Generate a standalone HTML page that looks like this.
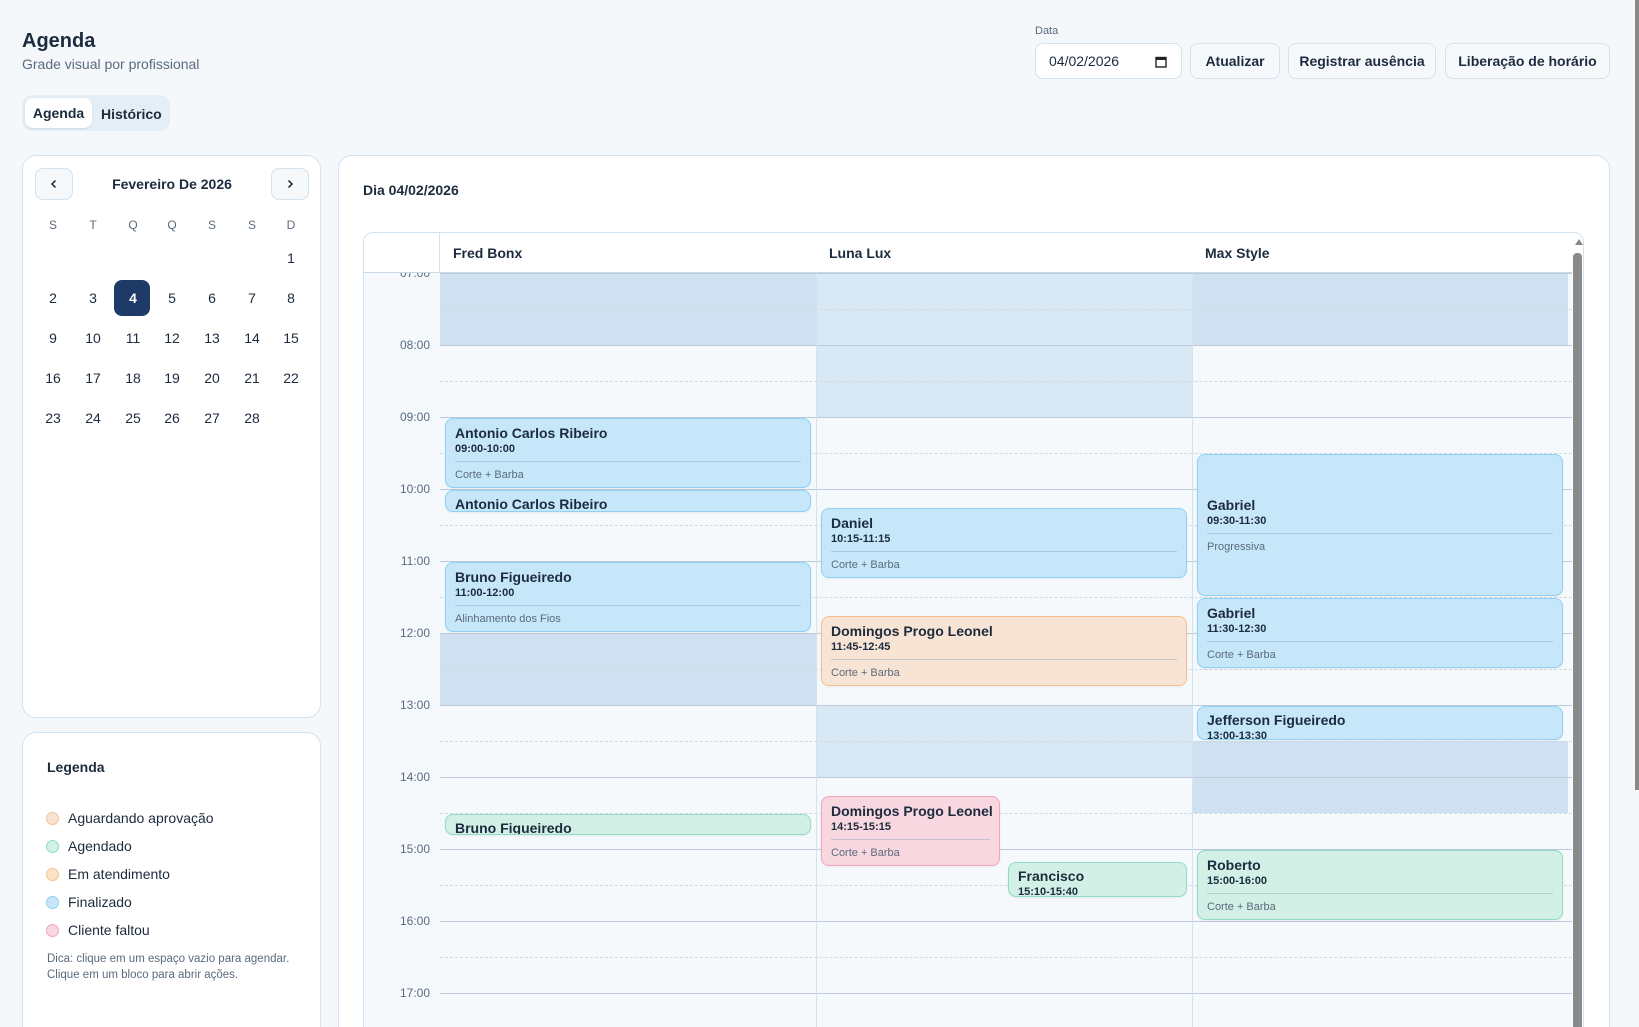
<!DOCTYPE html>
<html><head><meta charset="utf-8"><style>
*{box-sizing:border-box;margin:0;padding:0}
html,body{width:1639px;height:1027px;overflow:hidden}
body{background:#f4f8fb;font-family:"Liberation Sans",sans-serif;color:#1c2b3d;position:relative}
.a{position:absolute}
.btn{position:absolute;top:43px;height:36px;border:1px solid #d3e2ef;border-radius:8px;background:#f6f9fc;font-size:14px;font-weight:600;display:flex;align-items:center;justify-content:center;color:#1c2b3d}
.card{position:absolute;background:#fff;border:1px solid #d3e2ef;border-radius:14px}
.dl{position:absolute;width:36px;text-align:center;font-size:14px;transform:translateX(-18px)}
.wd{position:absolute;width:20px;text-align:center;font-size:12px;color:#5b6b7c;transform:translateX(-10px);top:218px}
.ev{position:absolute;border:1px solid #8fd0f3;background:#c5e7f9;border-radius:8px;padding:5px 9px;display:flex;flex-direction:column;justify-content:safe center;overflow:hidden;box-shadow:0 1px 2px rgba(0,0,0,.06)}
.ev b{font-size:14px;font-weight:600;line-height:17px;white-space:nowrap}
.ev i{font-style:normal;font-size:11px;font-weight:700;line-height:14px}
.ev hr{border:0;border-top:1px solid rgba(100,140,170,.3);margin:5px 0 6px}
.ev s{text-decoration:none;font-size:11px;color:#5b6b7c;line-height:14px}
.or{background:#f8e4d4;border-color:#f5c08f}
.pk{background:#f8d7e0;border-color:#f2a5b8}
.gr{background:#d2f0e6;border-color:#8fdcc0}
.sh{position:absolute;background:#cfe1f0}
.hl{position:absolute;left:76px;right:0;height:0;border-top:1px solid #bccbd9}
.hh{position:absolute;left:76px;right:0;height:0;border-top:1px dashed #cdd9e3}
.tl{position:absolute;left:0;width:66px;text-align:right;font-size:12px;color:#5b6b7c}
.lg{position:absolute;left:46px;font-size:14px;display:flex;align-items:center}
.lg span{width:13px;height:13px;border-radius:50%;margin-right:9px;border:1px solid}
</style></head><body>
<div class="a" style="left:22px;top:30px;font-size:20px;font-weight:600">Agenda</div>
<div class="a" style="left:22px;top:56px;font-size:14px;color:#5b6b7c">Grade visual por profissional</div>
<div class="a" style="left:22px;top:95px;width:148px;height:36px;background:#e6eef5;border-radius:10px"></div>
<div class="a" style="left:25px;top:98px;width:67px;height:30px;background:#fff;border-radius:8px;box-shadow:0 1px 2px rgba(0,0,0,.1);font-size:14px;font-weight:600;display:flex;align-items:center;justify-content:center">Agenda</div>
<div class="a" style="left:101px;top:106px;font-size:14px;font-weight:600">Histórico</div>

<div class="a" style="left:1035px;top:25px;font-size:11px;color:#5b6b7c">Data</div>
<div class="btn" style="left:1035px;width:147px;justify-content:flex-start;padding-left:13px;background:#fff;font-weight:400">04/02/2026
<svg class="a" style="left:119px;top:12px" width="12" height="12" viewBox="0 0 12 12"><rect x="1" y="1.5" width="10" height="9.5" fill="none" stroke="#222" stroke-width="1.4"/><rect x="1" y="1.5" width="10" height="2.5" fill="#222"/></svg></div>
<div class="btn" style="left:1190px;width:90px">Atualizar</div>
<div class="btn" style="left:1288px;width:148px">Registrar ausência</div>
<div class="btn" style="left:1445px;width:165px">Liberação de horário</div>
<div class="a" style="left:1635px;top:0;width:4px;height:790px;background:#8a8a8a"></div>

<div class="card" style="left:22px;top:155px;width:299px;height:563px"></div>
<div class="a" style="left:35px;top:168px;width:38px;height:32px;border:1px solid #d3e2ef;border-radius:8px;background:#f6f9fc;display:flex;align-items:center;justify-content:center"><svg width="10" height="10" viewBox="0 0 10 10"><path d="M6.5 1.5L3 5l3.5 3.5" fill="none" stroke="#222" stroke-width="1.5"/></svg></div>
<div class="a" style="left:271px;top:168px;width:38px;height:32px;border:1px solid #d3e2ef;border-radius:8px;background:#f6f9fc;display:flex;align-items:center;justify-content:center"><svg width="10" height="10" viewBox="0 0 10 10"><path d="M3.5 1.5L7 5 3.5 8.5" fill="none" stroke="#222" stroke-width="1.5"/></svg></div>
<div class="a" style="left:73px;top:176px;width:198px;text-align:center;font-size:14px;font-weight:600">Fevereiro De 2026</div>
<div class="wd" style="left:53px">S</div><div class="wd" style="left:93px">T</div><div class="wd" style="left:133px">Q</div><div class="wd" style="left:172px">Q</div><div class="wd" style="left:212px">S</div><div class="wd" style="left:252px">S</div><div class="wd" style="left:291px">D</div>
<div class="a" style="left:114px;top:280px;width:36px;height:36px;background:#1e3a66;border-radius:8px"></div>
<div id="days"></div>

<div class="card" style="left:22px;top:732px;width:299px;height:400px"></div>
<div class="a" style="left:47px;top:759px;font-size:14px;font-weight:600">Legenda</div>
<div class="lg" style="top:810px"><span style="background:#f8e4d4;border-color:#f5c08f"></span>Aguardando aprovação</div>
<div class="lg" style="top:838px"><span style="background:#d2f0e6;border-color:#8fdcc0"></span>Agendado</div>
<div class="lg" style="top:866px"><span style="background:#fbe3c8;border-color:#f5c08f"></span>Em atendimento</div>
<div class="lg" style="top:894px"><span style="background:#c5e7f9;border-color:#8fd0f3"></span>Finalizado</div>
<div class="lg" style="top:922px"><span style="background:#f8d7e0;border-color:#f2a5b8"></span>Cliente faltou</div>
<div class="a" style="left:47px;top:951px;font-size:11.5px;color:#5b6b7c;line-height:16px">Dica: clique em um espaço vazio para agendar.<br>Clique em um bloco para abrir ações.</div>

<div class="card" style="left:338px;top:155px;width:1272px;height:1000px"></div>
<div class="a" style="left:363px;top:182px;font-size:14px;font-weight:600">Dia 04/02/2026</div>

<div class="a" style="left:363px;top:232px;width:1221px;height:900px;border:1px solid #d3e2ef;border-radius:10px;background:#fff;overflow:hidden">
 <div class="a" style="left:0;top:0;width:1208px;height:40px;border-bottom:1px solid #c8d8e6"></div>
 <div class="a" style="left:89px;top:12px;font-size:14px;font-weight:600">Fred Bonx</div>
 <div class="a" style="left:465px;top:12px;font-size:14px;font-weight:600">Luna Lux</div>
 <div class="a" style="left:841px;top:12px;font-size:14px;font-weight:600">Max Style</div>
 <div class="a" style="left:75px;top:0;width:1px;height:900px;background:#d3e2ef"></div>
 <div id="body" class="a" style="left:0;top:40px;width:1208px;height:860px;background:#f5f9fc;overflow:hidden"></div>
 <div class="a" style="left:1208px;top:0;width:12px;height:900px;background:#fff"></div>
 <svg class="a" style="left:1211px;top:6px" width="8" height="6"><path d="M4 0L8 6H0z" fill="#888"/></svg>
 <div class="a" style="left:1209px;top:20px;width:9px;height:880px;background:#8a8a8a;border-radius:4px"></div>
</div>

<script>
var d=document.getElementById('days'),h='';
var xs=[53,93,133,172,212,252,291];
for(var n=1;n<=28;n++){var idx=(n+5)%7,row=Math.floor((n+5)/7);
h+='<div class="dl" style="left:'+xs[idx]+'px;top:'+(250+row*40)+'px;'+(n==4?'color:#fff;font-weight:700':'')+'">'+n+'</div>';}
d.innerHTML=h;
var b=document.getElementById('body'),H=72,o='';
function y(t){return (t-7)*H;}
var C=[76,452,828],W=376;
function sh(c,a,e,col){o+='<div class="sh" style="left:'+C[c]+'px;width:'+W+'px;top:'+y(a)+'px;height:'+(y(e)-y(a))+'px;background:'+(col||'#cfe1f0')+'"></div>';}
sh(0,7,8);sh(0,12,13);sh(1,7,9,'#d8e8f5');sh(1,13,14,'#d8e8f5');sh(2,7,8);sh(2,13.5,14.5);
for(var t=7;t<=19;t++){o+='<div class="hl" style="top:'+y(t)+'px"></div><div class="hh" style="top:'+(y(t)+36)+'px"></div>';
o+='<div class="tl" style="top:'+(y(t)-7)+'px">'+(t<10?'0':'')+t+':00</div>';}
o+='<div class="a" style="left:452px;top:0;width:1px;height:900px;background:#d3e2ef"></div><div class="a" style="left:828px;top:0;width:1px;height:900px;background:#d3e2ef"></div>';
function ev(x,w,t1,t2,cls,name,time,svc){o+='<div class="ev '+cls+'" style="left:'+x+'px;width:'+w+'px;top:'+t1+'px;height:'+(t2-t1)+'px"><b>'+name+'</b><i>'+time+'</i><hr><s>'+svc+'</s></div>';}
var T=273;
function Y(v){return v-T;}
ev(81,366,Y(418),Y(488),'','Antonio Carlos Ribeiro','09:00-10:00','Corte + Barba');
ev(81,366,Y(490),Y(512),'','Antonio Carlos Ribeiro','10:00-10:15','Corte + Barba');
ev(81,366,Y(562),Y(632),'','Bruno Figueiredo','11:00-12:00','Alinhamento dos Fios');
ev(81,366,Y(814),Y(835),'gr','Bruno Figueiredo','14:30-14:45','Corte');
ev(457,366,Y(508),Y(578),'','Daniel','10:15-11:15','Corte + Barba');
ev(457,366,Y(616),Y(686),'or','Domingos Progo Leonel','11:45-12:45','Corte + Barba');
ev(457,179,Y(796),Y(866),'pk','Domingos Progo Leonel','14:15-15:15','Corte + Barba');
ev(644,179,Y(862),Y(897),'gr','Francisco','15:10-15:40','Corte');
ev(833,366,Y(454),Y(596),'','Gabriel','09:30-11:30','Progressiva');
ev(833,366,Y(598),Y(668),'','Gabriel','11:30-12:30','Corte + Barba');
ev(833,366,Y(706),Y(740),'','Jefferson Figueiredo','13:00-13:30','Corte');
ev(833,366,Y(850),Y(920),'gr','Roberto','15:00-16:00','Corte + Barba');
b.innerHTML=o;
</script>
</body></html>
